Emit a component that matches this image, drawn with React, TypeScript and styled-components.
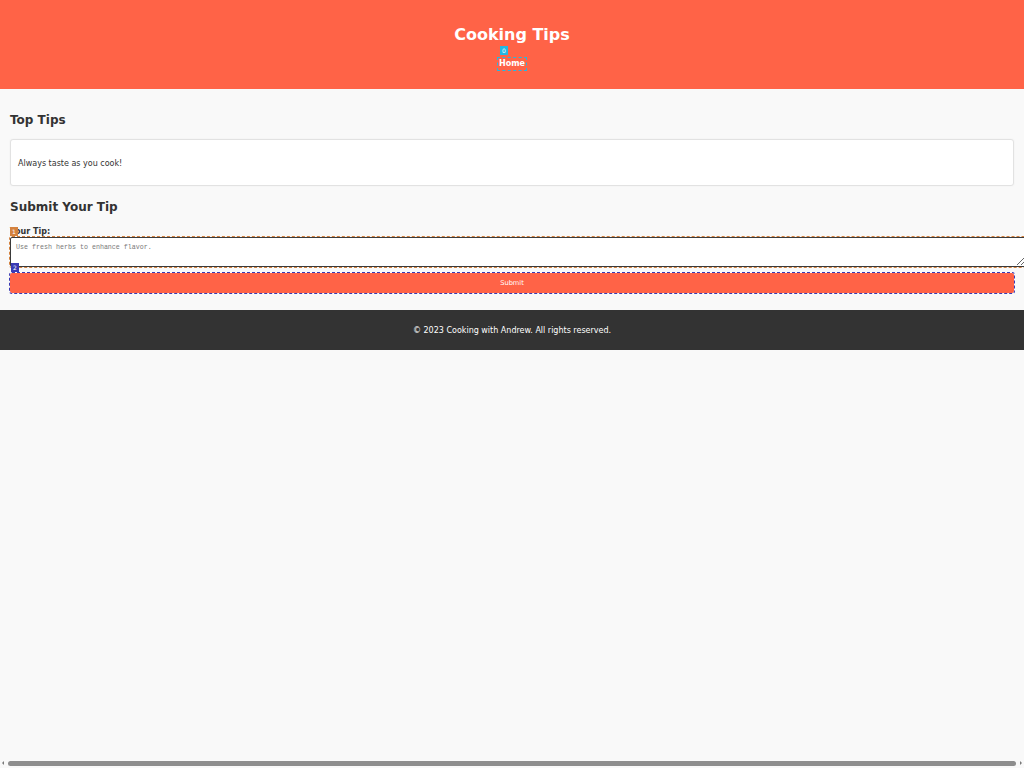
import React from "react";
import styled, { createGlobalStyle } from "styled-components";

const colors = {
  tomato: "#ff6347",
  page: "#f9f9f9",
  dark: "#333333",
  cyan: "#22b8e4",
  orange: "#d4823f",
  blue: "#3a3ab4",
};

const GlobalStyles = createGlobalStyle`
  html, body {
    margin: 0;
    padding: 0;
    background: ${colors.page};
    font-family: "DejaVu Sans", "Noto Sans", sans-serif;
    color: ${colors.dark};
  }
`;

const Header = styled.header`
  background: ${colors.tomato};
  color: #fff;
  text-align: center;
  padding: 26px 0 21px;
`;

const Title = styled.h1`
  margin: 0 0 12px;
  font-size: 16px;
  line-height: 18px;
  font-weight: bold;
`;

const Nav = styled.nav`
  height: 12px;
  line-height: 10px;
`;

// wrapper that carries a numbered marker over the element it holds
const Marked = styled.span<{ $block?: boolean }>`
  position: relative;
  display: ${({ $block }) => ($block ? "block" : "inline-block")};
`;

const Badge = styled.span<{ $color: string; $left?: number }>`
  position: absolute;
  left: ${({ $left }) => $left ?? 0}px;
  top: -10px;
  min-width: 8px;
  height: 9px;
  padding: 0 1px;
  box-sizing: border-box;
  background: ${({ $color }) => $color};
  color: #fff;
  font-size: 6px;
  line-height: 9px;
  text-align: center;
  font-weight: normal;
  z-index: 2;
`;

const NavLink = styled.a`
  display: inline-block;
  padding: 1px;
  color: #fff;
  font-weight: bold;
  font-size: 8px;
  line-height: 10px;
  text-decoration: none;
  outline: 1px dashed ${colors.cyan};
`;

const Main = styled.main`
  padding: 10px 10px 17px;
`;

const SectionTitle = styled.h2`
  margin: 14px 0 12px;
  font-size: 12px;
  line-height: 14px;
  font-weight: bold;
`;

const TipCard = styled.div`
  background: #fff;
  border: 1px solid #e2e2e2;
  border-radius: 3px;
  box-shadow: 0 0 2px rgba(0, 0, 0, 0.05);
  padding: 19px 7px 17px;
  font-size: 8px;
  line-height: 9px;
`;

const Form = styled.form`
  display: flex;
  flex-direction: column;
`;

const Label = styled.label`
  display: block;
  font-size: 8px;
  line-height: 10px;
  font-weight: bold;
  padding-top: 1px;
`;

const TextArea = styled.textarea`
  display: block;
  width: 100%;
  height: 18px;
  padding: 5px;
  margin: 0 0 6px;
  border: 1px solid #3a3a3a;
  border-radius: 2px;
  font-family: "Liberation Mono", monospace;
  font-size: 6.67px;
  background: #fff;
  color: ${colors.dark};
  outline: 1px dashed ${colors.orange};
  &::placeholder {
    color: #7a7a7a;
  }
`;

const SubmitButton = styled.button`
  display: block;
  width: 100%;
  height: 20px;
  border: none;
  border-radius: 2px;
  background: ${colors.tomato};
  color: #fff;
  font-family: "DejaVu Sans", sans-serif;
  font-size: 6.67px;
  cursor: pointer;
  outline: 1px dashed ${colors.blue};
`;

const Footer = styled.footer`
  background: ${colors.dark};
  color: #fff;
  text-align: center;
  padding: 16px 0 14px;
  font-size: 8px;
  line-height: 10px;
`;

// the page is a little wider than the window, so it shows a thin scrollbar
const ScrollBar = styled.div`
  position: fixed;
  left: 0;
  right: 0;
  bottom: 0;
  height: 9px;
  display: flex;
  align-items: center;
  gap: 4px;
  padding: 0 2px 1px;
  box-sizing: border-box;
  background: ${colors.page};
`;

const ScrollArrow = styled.span<{ $dir: "left" | "right" }>`
  width: 0;
  height: 0;
  border-top: 2.5px solid transparent;
  border-bottom: 2.5px solid transparent;
  ${({ $dir }) =>
    $dir === "left"
      ? "border-right: 2.5px solid #7a7a7a;"
      : "border-left: 2.5px solid #7a7a7a;"}
`;

const ScrollThumb = styled.span`
  flex: 1;
  height: 5px;
  border-radius: 3px;
  background: #8e8e8e;
`;

const App = () => {
  return (
    <>
      <GlobalStyles />
      <Header>
        <Title>Cooking Tips</Title>
        <Nav>
          <Marked>
            <Badge $color={colors.cyan} $left={2}>0</Badge>
            <NavLink href="#">Home</NavLink>
          </Marked>
        </Nav>
      </Header>
      <Main>
        <SectionTitle>Top Tips</SectionTitle>
        <TipCard>Always taste as you cook!</TipCard>
        <SectionTitle>Submit Your Tip</SectionTitle>
        <Form onSubmit={(e) => e.preventDefault()}>
          <Label htmlFor="tip">Your Tip:</Label>
          <Marked $block>
            <Badge $color={colors.orange}>1</Badge>
            <TextArea id="tip" placeholder="Use fresh herbs to enhance flavor." />
          </Marked>
          <Marked $block>
            <Badge $color={colors.blue} $left={1}>2</Badge>
            <SubmitButton type="submit">Submit</SubmitButton>
          </Marked>
        </Form>
      </Main>
      <Footer>© 2023 Cooking with Andrew. All rights reserved.</Footer>
      <ScrollBar>
        <ScrollArrow $dir="left" />
        <ScrollThumb />
        <ScrollArrow $dir="right" />
      </ScrollBar>
    </>
  );
};

export default App;
